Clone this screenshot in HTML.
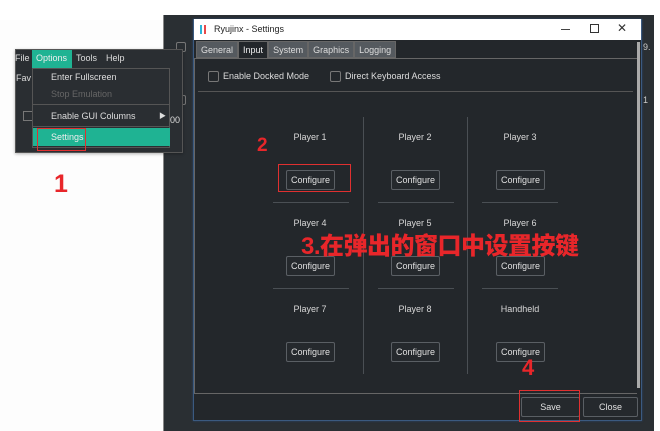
<!DOCTYPE html>
<html><head><meta charset="utf-8"><style>
*{margin:0;padding:0;box-sizing:border-box}
body{width:660px;height:431px;background:#fff;position:relative;overflow:hidden;font-family:"Liberation Sans","Noto Sans CJK SC",sans-serif;font-size:9px;color:#ddd}
.a{position:absolute}
.btn{position:absolute;border:1px solid #5a5f64;border-radius:2px;background:#25292d;color:#e0e0e0;text-align:center;line-height:18px;height:20px;width:49px}
.lbl{position:absolute;width:80px;text-align:center;color:#d8d8d8}
.hs{position:absolute;height:1px;width:76px;background:#4a4f54}
.red{color:#e8262a;font-weight:900;position:absolute}
</style></head><body>
<div class="a" style="left:0;top:20px;width:163px;height:411px;background:#fdfdfd"></div>
<div class="a" style="left:163px;top:15px;width:491px;height:416px;background:#2a2f33;border-left:1px solid #888"></div>
<div class="a" style="left:654px;top:15px;width:6px;height:416px;background:#fff"></div>
<div class="a" style="left:643px;top:42px;color:#ccc;font-size:9px">9.</div>
<div class="a" style="left:643px;top:95px;color:#ccc;font-size:9px">1</div>
<div class="a" style="left:176px;top:42px;width:10px;height:10px;border:1px solid #777;border-radius:2px"></div>
<div class="a" style="left:176px;top:95px;width:10px;height:10px;border:1px solid #777;border-radius:2px"></div>
<div class="a" style="left:193px;top:19px;width:449px;height:402px;background:#23272b;border:1px solid #3b5a80;box-shadow:0 0 2px #2a4a70"></div>
<div class="a" style="left:194px;top:19px;width:447px;height:21px;background:#fff;color:#222;font-size:9px;line-height:21px;padding-left:20px">Ryujinx - Settings</div>
<div class="a" style="left:200px;top:25px;width:2px;height:9px;background:#2bb5d9"></div>
<div class="a" style="left:204px;top:25px;width:2px;height:9px;background:#e8484a"></div>
<div class="a" style="left:561px;top:29px;width:9px;height:1px;background:#444"></div>
<div class="a" style="left:590px;top:24px;width:9px;height:9px;border:1px solid #333"></div>
<div class="a" style="left:617px;top:21px;color:#333;font-size:12px">✕</div>
<div class="a" style="left:196px;top:41px;height:17px;display:flex;font-size:9px;line-height:16px">
<div style="background:#555a5f;padding:0 4px;border:1px solid #666;color:#ddd">General</div>
<div style="background:#23272b;padding:0 4px;border:1px solid #666;border-bottom:none;color:#eee">Input</div>
<div style="background:#555a5f;padding:0 4px;border:1px solid #666;color:#ddd">System</div>
<div style="background:#555a5f;padding:0 4px;border:1px solid #666;color:#ddd">Graphics</div>
<div style="background:#555a5f;padding:0 4px;border:1px solid #666;color:#ddd">Logging</div>
</div>
<div class="a" style="left:194px;top:58px;width:443px;height:1px;background:#666"></div>
<div class="a" style="left:194px;top:58px;width:1px;height:336px;background:#666"></div>
<div class="a" style="left:194px;top:393px;width:443px;height:1px;background:#666"></div>
<div class="a" style="left:637px;top:42px;width:3px;height:346px;background:#aaa"></div>
<div class="a" style="left:208px;top:71px;width:11px;height:11px;border:1px solid #777;border-radius:2px"></div>
<div class="a" style="left:223px;top:71px">Enable Docked Mode</div>
<div class="a" style="left:330px;top:71px;width:11px;height:11px;border:1px solid #777;border-radius:2px"></div>
<div class="a" style="left:345px;top:71px">Direct Keyboard Access</div>
<div class="a" style="left:198px;top:91px;width:435px;height:1px;background:#555"></div>
<div class="a" style="left:363px;top:117px;width:1px;height:257px;background:#4a4f54"></div>
<div class="a" style="left:467px;top:117px;width:1px;height:257px;background:#4a4f54"></div>
<div class="hs" style="left:273px;top:202px"></div><div class="hs" style="left:378px;top:202px"></div><div class="hs" style="left:482px;top:202px"></div>
<div class="hs" style="left:273px;top:288px"></div><div class="hs" style="left:378px;top:288px"></div><div class="hs" style="left:482px;top:288px"></div>
<div class="lbl" style="left:270px;top:132px">Player 1</div><div class="lbl" style="left:375px;top:132px">Player 2</div><div class="lbl" style="left:480px;top:132px">Player 3</div>
<div class="lbl" style="left:270px;top:218px">Player 4</div><div class="lbl" style="left:375px;top:218px">Player 5</div><div class="lbl" style="left:480px;top:218px">Player 6</div>
<div class="lbl" style="left:270px;top:304px">Player 7</div><div class="lbl" style="left:375px;top:304px">Player 8</div><div class="lbl" style="left:480px;top:304px">Handheld</div>
<div class="btn" style="left:286px;top:170px">Configure</div><div class="btn" style="left:391px;top:170px">Configure</div><div class="btn" style="left:496px;top:170px">Configure</div>
<div class="btn" style="left:286px;top:256px">Configure</div><div class="btn" style="left:391px;top:256px">Configure</div><div class="btn" style="left:496px;top:256px">Configure</div>
<div class="btn" style="left:286px;top:342px">Configure</div><div class="btn" style="left:391px;top:342px">Configure</div><div class="btn" style="left:496px;top:342px">Configure</div>
<div class="btn" style="left:521px;top:397px;width:59px">Save</div>
<div class="btn" style="left:583px;top:397px;width:55px">Close</div>
<div class="a" style="left:15px;top:49px;width:168px;height:104px;background:#2a2e32;border:1px solid #555;box-shadow:0 1px 3px rgba(0,0,0,.3)"></div>
<div class="a" style="left:15px;top:53px;color:#ddd">File</div>
<div class="a" style="left:32px;top:50px;width:40px;height:18px;background:#1fb393"></div>
<div class="a" style="left:36px;top:53px;color:#eee">Options</div>
<div class="a" style="left:76px;top:53px">Tools</div>
<div class="a" style="left:106px;top:53px">Help</div>
<div class="a" style="left:16px;top:73px">Fav</div>
<div class="a" style="left:23px;top:111px;width:10px;height:10px;border:1px solid #777"></div>
<div class="a" style="left:170px;top:115px">00</div>
<div class="a" style="left:32px;top:68px;width:138px;height:80px;background:#2a2e32;border:1px solid #555"></div>
<div class="a" style="left:51px;top:72px">Enter Fullscreen</div>
<div class="a" style="left:51px;top:89px;color:#666">Stop Emulation</div>
<div class="a" style="left:33px;top:104px;width:136px;height:1px;background:#555"></div>
<div class="a" style="left:51px;top:111px">Enable GUI Columns</div>
<div class="a" style="left:159px;top:111px;font-size:7px">▶</div>
<div class="a" style="left:33px;top:126px;width:136px;height:1px;background:#555"></div>
<div class="a" style="left:33px;top:128px;width:137px;height:18px;background:#1fb393"></div>
<div class="a" style="left:51px;top:132px;color:#eee">Settings</div>
<div class="a" style="left:37px;top:128px;width:49px;height:23px;border:1px solid #e03030"></div>
<div class="a" style="left:278px;top:164px;width:73px;height:28px;border:1px solid #e03030"></div>
<div class="a" style="left:519px;top:390px;width:61px;height:32px;border:1px solid #e03030"></div>
<div class="red" style="left:54px;top:170px;font-size:25px">1</div>
<div class="red" style="left:257px;top:135px;font-size:19px">2</div>
<div class="red" style="left:301px;top:226px;font-size:24px;white-space:nowrap;letter-spacing:-0.5px">3.在弹出的窗口中设置按键</div>
<div class="red" style="left:522px;top:355px;font-size:22px">4</div>
</body></html>
